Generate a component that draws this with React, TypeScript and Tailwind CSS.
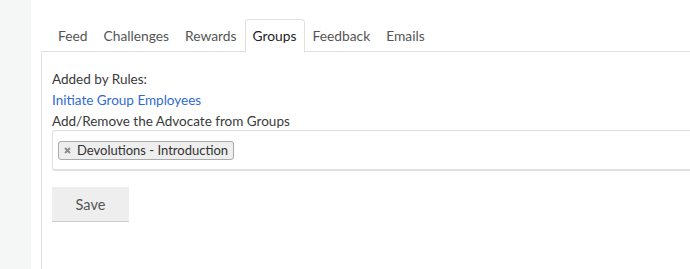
import { useState } from "react";

const tabs = ["Feed", "Challenges", "Rewards", "Groups", "Feedback", "Emails"];

export default function App() {
  const [active, setActive] = useState("Groups");
  const [groups, setGroups] = useState(["Devolutions - Introduction"]);

  return (
    <div className="flex h-[269px] w-[690px] overflow-hidden bg-white font-['Lato','Open_Sans',sans-serif] text-[13.5px] text-[#3a3a3a]">
      <aside className="w-[31px] shrink-0 bg-[#f5f6f6]" />

      <main className="flex-1 pl-[10px] pt-[19px]">
        {/* Tabs */}
        <ul className="flex h-[33px] border-b border-[#e0e0e0] pl-[9px] text-[13.8px]">
          {tabs.map((tab) => (
            <li
              key={tab}
              onClick={() => setActive(tab)}
              className={`-mb-px flex h-[34px] cursor-pointer items-center rounded-t-[4px] border px-[7px] ${
                tab === active
                  ? "border-[#e0e0e0] border-b-white bg-white text-[#222]"
                  : "border-transparent text-[#555]"
              }`}
            >
              {tab}
            </li>
          ))}
        </ul>

        {/* Panel */}
        <section className="h-full rounded-tl-[3px] border-l border-[#e0e0e0] pl-[10px] pt-[17px] leading-[21px]">
          <p>Added by Rules:</p>
          <a href="#" className="text-[#2f6bd1]">
            Initiate Group Employees
          </a>
          <p>Add/Remove the Advocate from Groups</p>

          <div className="-mt-[2px] flex h-[41px] items-start rounded-l-[3px] border border-r-0 border-b-2 border-[#e0e0e0] pl-[5px] pt-[10px]">
            {groups.map((g) => (
              <span
                key={g}
                className="flex h-[19px] items-center gap-[6px] rounded-[3px] border border-[#aaa] bg-[#eee] pl-[5px] pr-[5px] text-[13px] leading-none text-[#333]"
              >
                <button onClick={() => setGroups(groups.filter((x) => x !== g))}>
                  <svg width="7" height="7" viewBox="0 0 7 7" className="block">
                    <path d="M1 1L6 6M6 1L1 6" stroke="#8a8a8a" strokeWidth="1.8" />
                  </svg>
                </button>
                {g}
              </span>
            ))}
          </div>

          <button className="mt-[16px] h-[34px] w-[77px] bg-[#eee] text-[14.5px] text-[#555] shadow-[0_1px_0_#ccc]">
            Save
          </button>
        </section>
      </main>
    </div>
  );
}
